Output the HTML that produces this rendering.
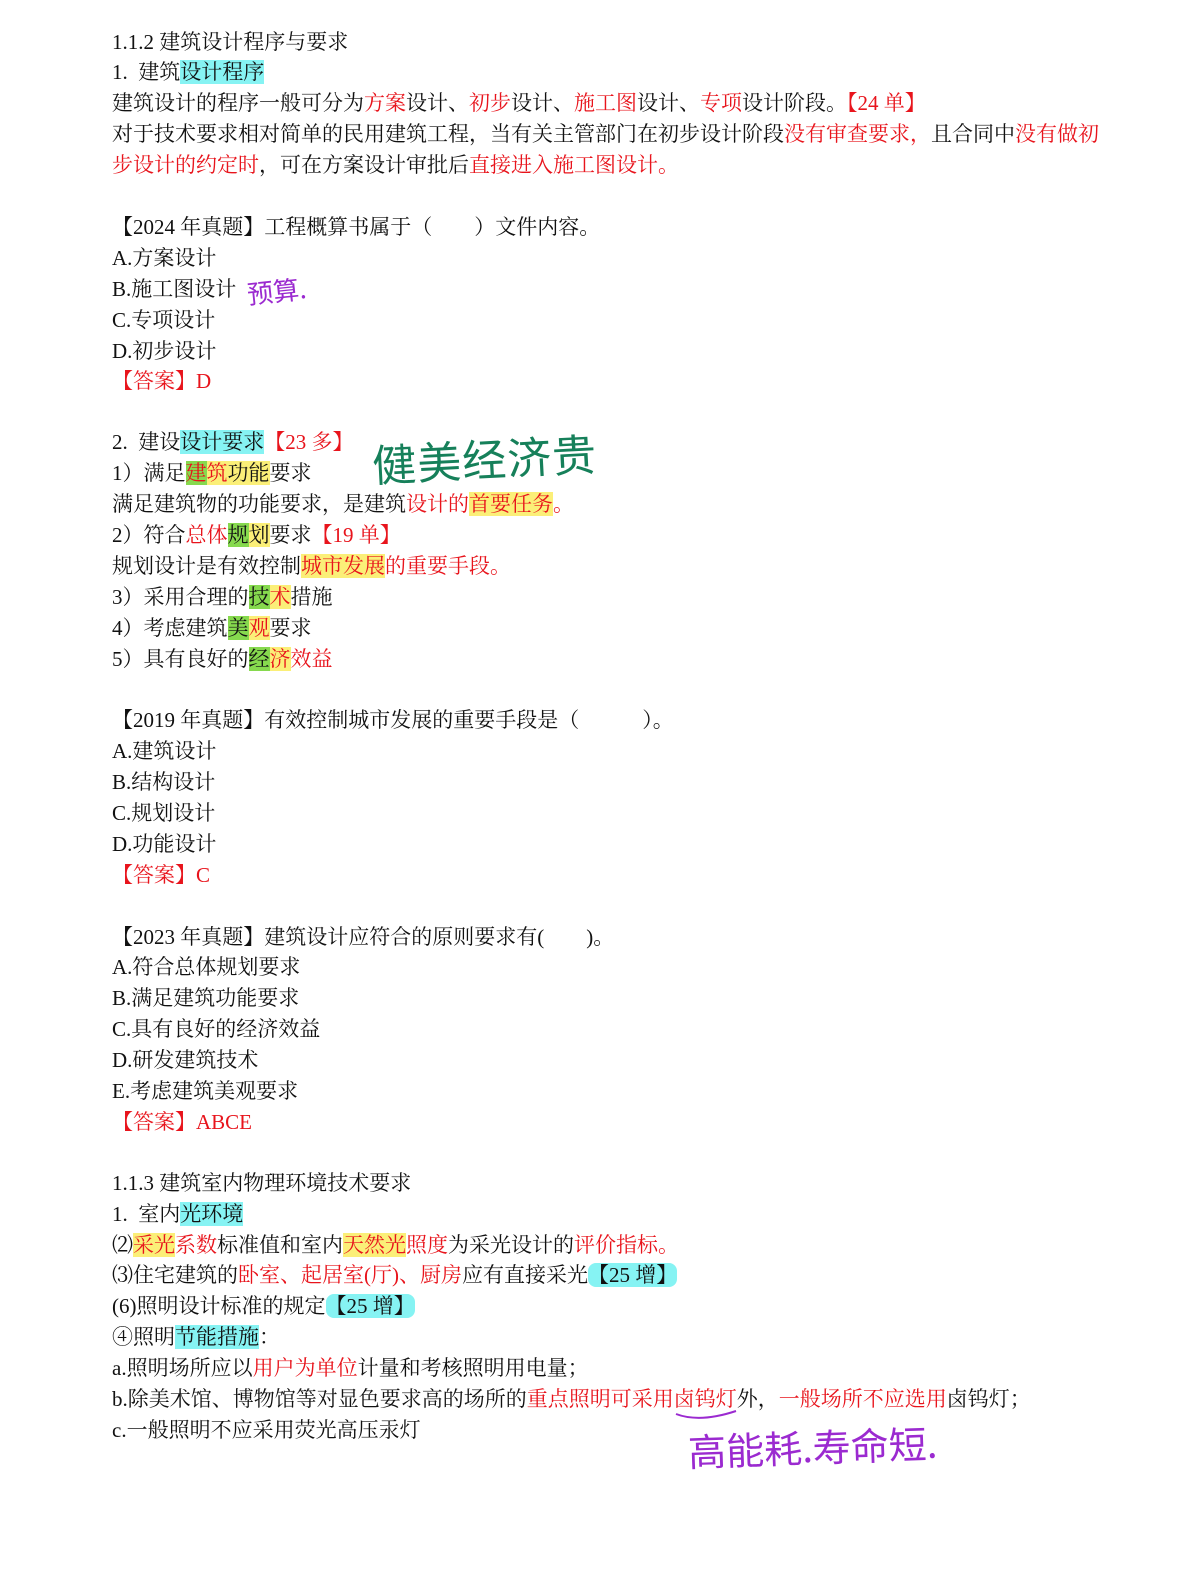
<!DOCTYPE html>
<html><head><meta charset="utf-8">
<style>
html,body{margin:0;padding:0;background:#fff;}
body{width:1191px;height:1586px;position:relative;overflow:hidden;font-family:"Liberation Serif","Noto Serif CJK SC",serif;font-size:21px;color:#111;}
.l{position:absolute;left:112px;height:30px;line-height:30px;white-space:nowrap;}
.r{color:#e8141c;}
.c{background:#86f3f3;}
.y{background:#fbef78;}
.g{background:#86d94e;}
.hw{position:absolute;font-family:"Noto Sans CJK SC",sans-serif;white-space:nowrap;}
</style></head><body>
<div class="l" style="top:27px">1.1.2 建筑设计程序与要求</div>
<div class="l" style="top:57px">1. &nbsp;建筑<span class="c">设计程序</span></div>
<div class="l" style="top:88px">建筑设计的程序一般可分为<span class="r">方案</span>设计、<span class="r">初步</span>设计、<span class="r">施工图</span>设计、<span class="r">专项</span>设计阶段。<span class="r">【24 单】</span></div>
<div class="l" style="top:119px">对于技术要求相对简单的民用建筑工程，当有关主管部门在初步设计阶段<span class="r">没有审查要求，</span>且合同中<span class="r">没有做初</span></div>
<div class="l" style="top:150px"><span class="r">步设计的约定时</span>，可在方案设计审批后<span class="r">直接进入施工图设计。</span></div>
<div class="l" style="top:212px">【2024 年真题】工程概算书属于（　　）文件内容。</div>
<div class="l" style="top:243px">A.方案设计</div>
<div class="l" style="top:274px">B.施工图设计</div>
<div class="l" style="top:305px">C.专项设计</div>
<div class="l" style="top:336px">D.初步设计</div>
<div class="l r" style="top:366px">【答案】D</div>
<div class="l" style="top:427px">2. &nbsp;建设<span class="c">设计要求</span><span class="r">【23 多】</span></div>
<div class="l" style="top:458px">1）满足<span class="g r">建</span><span class="y r">筑</span><span class="y">功能</span>要求</div>
<div class="l" style="top:489px">满足建筑物的功能要求，是建筑<span class="r">设计的</span><span class="y r">首要任务</span><span class="r">。</span></div>
<div class="l" style="top:520px">2）符合<span class="r">总体</span><span class="g">规</span><span class="y">划</span>要求<span class="r">【19 单】</span></div>
<div class="l" style="top:551px">规划设计是有效控制<span class="y r">城市发展</span><span class="r">的重要手段。</span></div>
<div class="l" style="top:582px">3）采用合理的<span class="g">技</span><span class="y r">术</span>措施</div>
<div class="l" style="top:613px">4）考虑建筑<span class="g">美</span><span class="y r">观</span>要求</div>
<div class="l" style="top:644px">5）具有良好的<span class="g">经</span><span class="y r">济</span><span class="r">效益</span></div>
<div class="l" style="top:705px">【2019 年真题】有效控制城市发展的重要手段是（　　　）。</div>
<div class="l" style="top:736px">A.建筑设计</div>
<div class="l" style="top:767px">B.结构设计</div>
<div class="l" style="top:798px">C.规划设计</div>
<div class="l" style="top:829px">D.功能设计</div>
<div class="l r" style="top:860px">【答案】C</div>
<div class="l" style="top:922px">【2023 年真题】建筑设计应符合的原则要求有(　　)。</div>
<div class="l" style="top:952px">A.符合总体规划要求</div>
<div class="l" style="top:983px">B.满足建筑功能要求</div>
<div class="l" style="top:1014px">C.具有良好的经济效益</div>
<div class="l" style="top:1045px">D.研发建筑技术</div>
<div class="l" style="top:1076px">E.考虑建筑美观要求</div>
<div class="l r" style="top:1107px">【答案】ABCE</div>
<div class="l" style="top:1168px">1.1.3 建筑室内物理环境技术要求</div>
<div class="l" style="top:1199px">1. &nbsp;室内<span class="c">光环境</span></div>
<div class="l" style="top:1230px">⑵<span class="y r">采光</span><span class="r">系数</span>标准值和室内<span class="y r">天然光</span><span class="r">照度</span>为采光设计的<span class="r">评价指标。</span></div>
<div class="l" style="top:1260px">⑶住宅建筑的<span class="r">卧室、起居室(厅)、厨房</span>应有直接采光<span class="c" style="border-radius:8px">【25 增】</span></div>
<div class="l" style="top:1291px">(6)照明设计标准的规定<span class="c" style="border-radius:8px">【25 增】</span></div>
<div class="l" style="top:1322px">④照明<span class="c">节能措施</span>：</div>
<div class="l" style="top:1353px">a.照明场所应以<span class="r">用户为单位</span>计量和考核照明用电量；</div>
<div class="l" style="top:1384px">b.除美术馆、博物馆等对显色要求高的场所的<span class="r">重点照明可采用卤钨灯</span>外，<span class="r">一般场所不应选用</span>卤钨灯；</div>
<div class="l" style="top:1415px">c.一般照明不应采用荧光高压汞灯</div>

<div class="hw" style="left:247px;top:272px;color:#9b2ad0;font-size:26px;transform:rotate(-6deg)">预算.</div>
<div class="hw" style="left:372px;top:425px;color:#16805a;font-size:44px;letter-spacing:1px;transform:rotate(-3deg)">健美经济贵</div>
<div class="hw" style="left:688px;top:1418px;color:#9b2ad0;font-size:38px;transform:rotate(-2deg)">高能耗.寿命短.</div>
<svg style="position:absolute;left:0;top:0" width="1191" height="1586"><path d="M676 1414 Q700 1423 736 1411" stroke="#9b2ad0" stroke-width="2" fill="none"/></svg>
</body></html>
